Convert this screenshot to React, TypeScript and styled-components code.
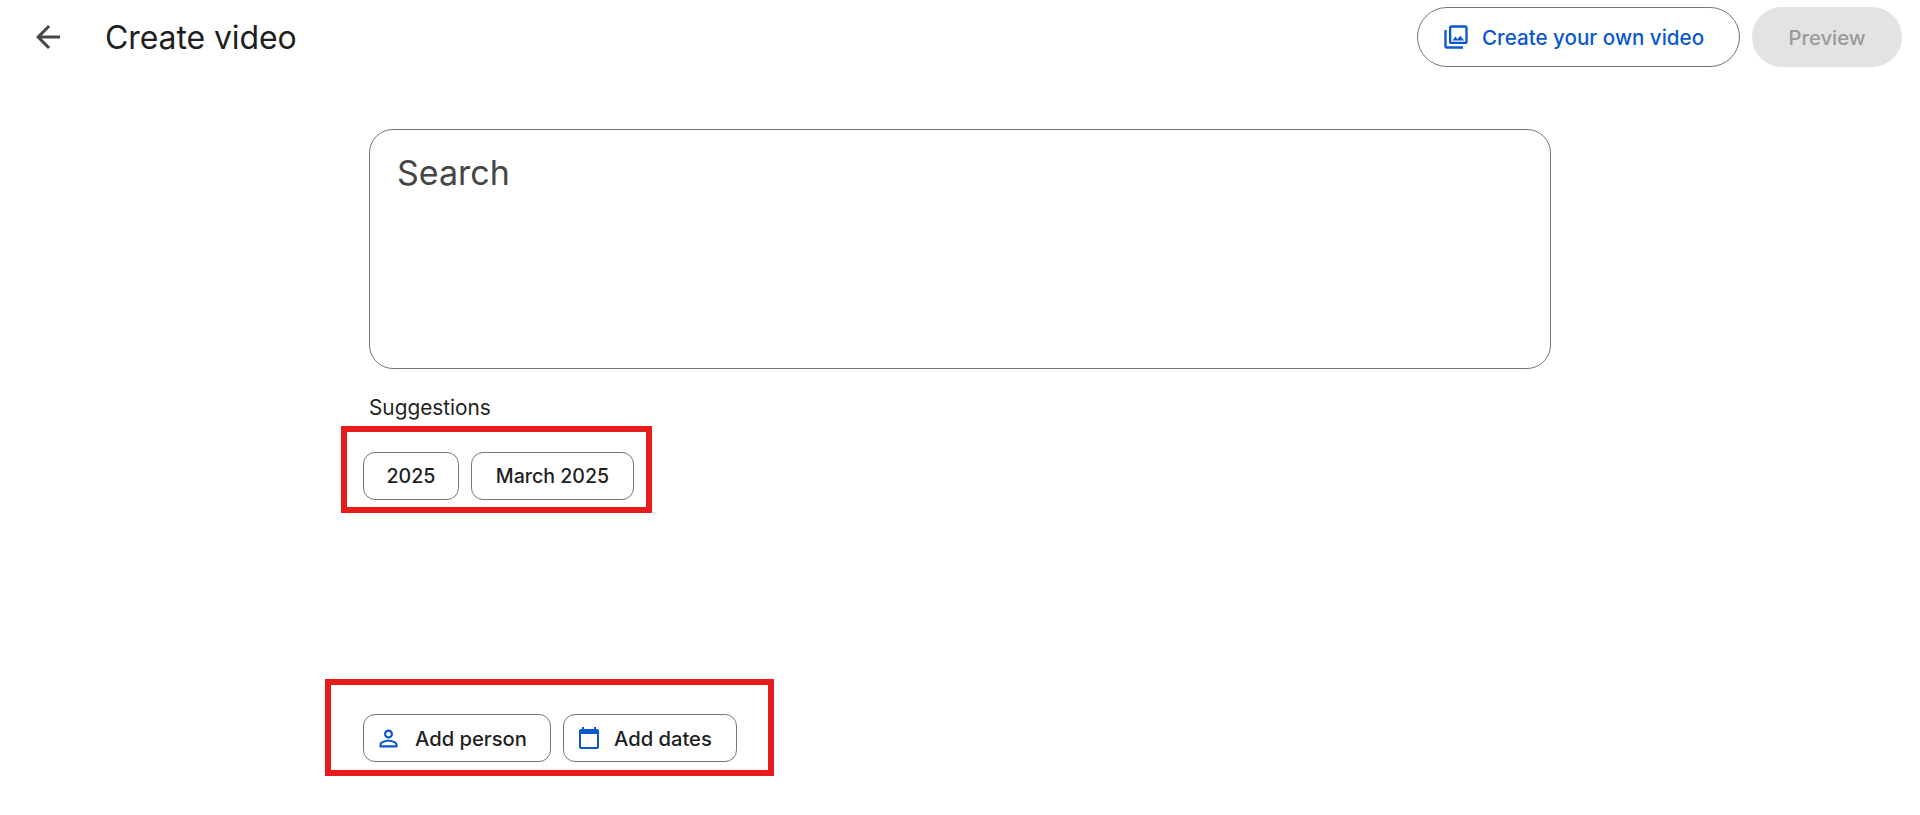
import React from "react";
import styled, { createGlobalStyle } from "styled-components";

const GlobalStyle = createGlobalStyle`
  html, body {
    margin: 0;
    background: #fff;
    font-family: Inter, Roboto, sans-serif;
    color: #1f1f1f;
  }
`;

const Page = styled.div`
  position: relative;
  height: 815px;
  overflow: hidden;
`;
const Header = styled.header`
  display: flex;
  align-items: center;
  height: 74px;
  padding: 0 18px 0 30px;
`;
const BackIcon = styled.svg`
  width: 36px;
  height: 36px;
  fill: #444746;
  margin-right: 39px;
`;
const Title = styled.h1`
  flex-grow: 1;
  margin: 0;
  font-size: 32px;
  font-weight: 400;
  letter-spacing: -0.1px;
`;
const OutlineButton = styled.button`
  display: flex;
  align-items: center;
  gap: 12px;
  height: 60px;
  width: 323px;
  padding: 0 24px;
  border: 1px solid #747775;
  border-radius: 30px;
  background: #fff;
  color: #0b57d0;
  font: 500 20.6px Inter, sans-serif;
`;
const PreviewButton = styled.button`
  height: 60px;
  width: 150px;
  margin-left: 12px;
  border: 0;
  border-radius: 30px;
  background: #e3e3e3;
  color: #9a9a9a;
  font: 500 20.3px Inter, sans-serif;
`;
const Main = styled.main`
  width: 1182px;
  margin: 55px 0 0 369px;
`;
const SearchBox = styled.div`
  box-sizing: border-box;
  height: 240px;
  padding: 22px 27px;
  border: 1px solid #747775;
  border-radius: 24px;
  color: #444746;
  font-size: 34px;
`;
const SectionLabel = styled.div`
  margin-top: 27px;
  font-size: 20.8px;
  line-height: 24px;
`;
const ChipRow = styled.div<{ $top: number }>`
  display: flex;
  gap: 12px;
  margin: ${props => props.$top}px 0 0 -6px;
`;
const Chip = styled.button<{ $width: number }>`
  display: flex;
  align-items: center;
  justify-content: center;
  box-sizing: border-box;
  width: ${props => props.$width}px;
  height: 48px;
  padding: 0;
  border: 1px solid #747775;
  border-radius: 12px;
  background: #fff;
  color: #1f1f1f;
  font: 500 19.6px Inter, sans-serif;
`;
const IconChip = styled(Chip)<{ $pad: number }>`
  justify-content: flex-start;
  gap: 13px;
  padding-left: ${props => props.$pad}px;
  font-size: 20.2px;
`;
const BlueIcon = styled.svg<{ $size: number }>`
  width: ${props => props.$size}px;
  height: ${props => props.$size}px;
  fill: #0b57d0;
  flex-shrink: 0;
`;
const Annotation = styled.div<{ $x: number; $y: number; $w: number; $h: number }>`
  position: absolute;
  box-sizing: border-box;
  left: ${props => props.$x}px;
  top: ${props => props.$y}px;
  width: ${props => props.$w}px;
  height: ${props => props.$h}px;
  border: 6px solid #e81c1c;
`;

export default function App() {
  return (
    <Page>
      <GlobalStyle />
      <Header>
        <BackIcon viewBox="0 0 24 24">
          <path d="M20 11H7.83l5.59-5.59L12 4l-8 8 8 8 1.41-1.41L7.83 13H20v-2z" />
        </BackIcon>
        <Title>Create video</Title>
        <OutlineButton>
          <BlueIcon $size={28} viewBox="0 0 24 24">
            <path d="M20 4v12H8V4h12m0-2H8c-1.1 0-2 .9-2 2v12c0 1.1.9 2 2 2h12c1.1 0 2-.9 2-2V4c0-1.1-.9-2-2-2zm-8.5 9.67l1.69 2.26 2.48-3.1L19 15H9zM2 6v14c0 1.1.9 2 2 2h14v-2H4V6H2z" />
          </BlueIcon>
          Create your own video
        </OutlineButton>
        <PreviewButton>Preview</PreviewButton>
      </Header>
      <Main>
        <SearchBox>Search</SearchBox>
        <SectionLabel>Suggestions</SectionLabel>
        <ChipRow $top={32}>
          <Chip $width={96}>2025</Chip>
          <Chip $width={163}>March 2025</Chip>
        </ChipRow>
        <ChipRow $top={214}>
          <IconChip $width={188} $pad={11}>
            <BlueIcon $size={27} viewBox="0 0 24 24">
              <path d="M12 5.9c1.16 0 2.1.94 2.1 2.1s-.94 2.1-2.1 2.1S9.9 9.16 9.9 8s.94-2.1 2.1-2.1m0 9c2.97 0 6.1 1.46 6.1 2.1v1.1H5.9V17c0-.64 3.13-2.1 6.1-2.1M12 4C9.79 4 8 5.79 8 8s1.79 4 4 4 4-1.79 4-4-1.79-4-4-4zm0 9c-2.67 0-8 1.34-8 4v3h16v-3c0-2.66-5.33-4-8-4z" />
            </BlueIcon>
            Add person
          </IconChip>
          <IconChip $width={174} $pad={13}>
            <BlueIcon $size={24} viewBox="0 0 24 24">
              <path d="M20 3h-1V1h-2v2H7V1H5v2H4c-1.1 0-2 .9-2 2v16c0 1.1.9 2 2 2h16c1.1 0 2-.9 2-2V5c0-1.1-.9-2-2-2zm0 18H4V8h16v13z" />
            </BlueIcon>
            Add dates
          </IconChip>
        </ChipRow>
      </Main>
      <Annotation $x={341} $y={426} $w={311} $h={87} />
      <Annotation $x={325} $y={679} $w={449} $h={97} />
    </Page>
  );
}
